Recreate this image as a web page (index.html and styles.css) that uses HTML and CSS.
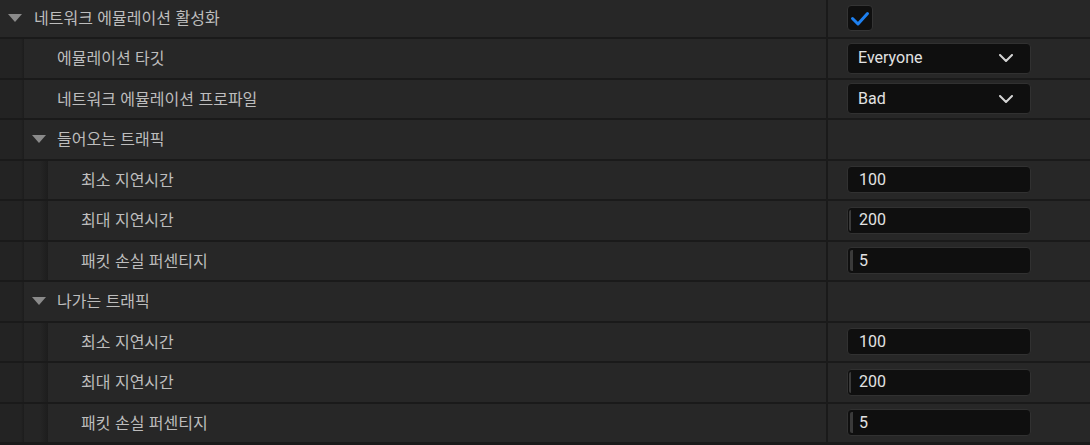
FILE: index.html
```html
<!DOCTYPE html>
<html lang="ko">
<head>
<meta charset="utf-8">
<title>Network Emulation</title>
<link rel="stylesheet" href="styles.css">
</head>
<body>
<div class="panel">
  <div class="row first">
    <div class="name">
      <div class="label group">
        <svg class="tri" width="14" height="8" viewBox="0 0 14 8"><polygon points="0,0 14,0 7,8" fill="#8a8a8a"/></svg>
        <span>네트워크 에뮬레이션 활성화</span>
      </div>
    </div>
    <div class="value">
      <span class="check">
        <svg width="24" height="24" viewBox="0 0 24 24"><polyline points="4.5,12.5 10,18 19.5,7.5" fill="none" stroke="#1e80f0" stroke-width="3" stroke-linecap="round" stroke-linejoin="round"/></svg>
      </span>
    </div>
  </div>

  <div class="row">
    <div class="name">
      <span class="gutter g1"></span>
      <div class="label"><span>에뮬레이션 타깃</span></div>
    </div>
    <div class="value">
      <div class="field combo"><span>Everyone</span>
        <svg class="chev" width="14" height="8" viewBox="0 0 14 8"><polyline points="1,1 7,7 13,1" fill="none" stroke="#d4d4d4" stroke-width="2" stroke-linecap="round" stroke-linejoin="round"/></svg>
      </div>
    </div>
  </div>

  <div class="row">
    <div class="name">
      <span class="gutter g1"></span>
      <div class="label"><span>네트워크 에뮬레이션 프로파일</span></div>
    </div>
    <div class="value">
      <div class="field combo"><span>Bad</span>
        <svg class="chev" width="14" height="8" viewBox="0 0 14 8"><polyline points="1,1 7,7 13,1" fill="none" stroke="#d4d4d4" stroke-width="2" stroke-linecap="round" stroke-linejoin="round"/></svg>
      </div>
    </div>
  </div>

  <div class="row">
    <div class="name">
      <span class="gutter g1"></span>
      <div class="label group">
        <svg class="tri" width="14" height="8" viewBox="0 0 14 8"><polygon points="0,0 14,0 7,8" fill="#8a8a8a"/></svg>
        <span>들어오는 트래픽</span>
      </div>
    </div>
    <div class="value"></div>
  </div>

  <div class="row">
    <div class="name">
      <span class="gutter g1"></span><span class="gutter g2"></span>
      <div class="label"><span>최소 지연시간</span></div>
    </div>
    <div class="value"><div class="field num"><span>100</span></div></div>
  </div>

  <div class="row">
    <div class="name">
      <span class="gutter g1"></span><span class="gutter g2"></span>
      <div class="label"><span>최대 지연시간</span></div>
    </div>
    <div class="value"><div class="field num"><span class="fill fill-s"></span><span>200</span></div></div>
  </div>

  <div class="row">
    <div class="name">
      <span class="gutter g1"></span><span class="gutter g2"></span>
      <div class="label"><span>패킷 손실 퍼센티지</span></div>
    </div>
    <div class="value"><div class="field num"><span class="fill fill-m"></span><span>5</span></div></div>
  </div>

  <div class="row">
    <div class="name">
      <span class="gutter g1"></span>
      <div class="label group">
        <svg class="tri" width="14" height="8" viewBox="0 0 14 8"><polygon points="0,0 14,0 7,8" fill="#8a8a8a"/></svg>
        <span>나가는 트래픽</span>
      </div>
    </div>
    <div class="value"></div>
  </div>

  <div class="row">
    <div class="name">
      <span class="gutter g1"></span><span class="gutter g2"></span>
      <div class="label"><span>최소 지연시간</span></div>
    </div>
    <div class="value"><div class="field num"><span>100</span></div></div>
  </div>

  <div class="row">
    <div class="name">
      <span class="gutter g1"></span><span class="gutter g2"></span>
      <div class="label"><span>최대 지연시간</span></div>
    </div>
    <div class="value"><div class="field num"><span class="fill fill-s"></span><span>200</span></div></div>
  </div>

  <div class="row">
    <div class="name">
      <span class="gutter g1"></span><span class="gutter g2"></span>
      <div class="label"><span>패킷 손실 퍼센티지</span></div>
    </div>
    <div class="value"><div class="field num"><span class="fill fill-m"></span><span>5</span></div></div>
  </div>
</div>
</body>
</html>
```

FILE: styles.css
```css
html, body {
  margin: 0;
  padding: 0;
  background: #1a1a1a;
}

body {
  font-family: "Noto Sans CJK KR", "Noto Sans", sans-serif;
  overflow: hidden;
}

.panel {
  width: 1090px;
  display: flex;
  flex-direction: column;
  gap: 2px;
}

.row {
  display: flex;
  height: 38.5px;
  background: #272727;
  flex: none;
}

.row.first {
  margin-top: -1.5px;
}

.name {
  width: 826px;
  flex: none;
  display: flex;
  align-items: stretch;
}

.gutter {
  width: 24px;
  flex: none;
}

.g1 {
  background: linear-gradient(to right, #232323 0, #232323 21px, #1c1c1c 24px);
}

.g2 {
  background: linear-gradient(to right, #252525 0, #252525 16px, #1d1d1d 24px);
}

.label {
  flex: 1;
  display: flex;
  align-items: center;
  padding-left: 33px;
  padding-bottom: 2px;
  box-sizing: border-box;
  color: #bdbdbd;
  font-size: 16px;
  line-height: 1;
  white-space: nowrap;
}

.label.group {
  padding-left: 8px;
}

.label.group span {
  margin-left: 11px;
}

.first .label.group span {
  margin-left: 12px;
}

.tri {
  flex: none;
  display: block;
  margin-top: 2px;
}

.value {
  flex: 1;
  border-left: 2px solid #1a1a1a;
  display: flex;
  align-items: center;
  padding-left: 19px;
}

.check {
  width: 26px;
  height: 26px;
  box-sizing: border-box;
  background: #0f0f0f;
  border: 1px solid #343434;
  border-radius: 4px;
  display: flex;
  align-items: center;
  justify-content: center;
}

.check svg {
  display: block;
}

.field {
  position: relative;
  width: 184px;
  box-sizing: border-box;
  background: #0f0f0f;
  border: 1px solid #313131;
  border-radius: 4px;
  display: flex;
  align-items: center;
  font-family: Roboto, "Liberation Sans", sans-serif;
  font-size: 16px;
  line-height: 1;
  color: #e2e2e2;
}

.combo {
  height: 31px;
  padding-left: 10px;
  padding-right: 17px;
  justify-content: space-between;
}

.chev {
  display: block;
  flex: none;
}

.num {
  height: 27px;
  padding-left: 11px;
}

.fill {
  position: absolute;
  left: 1px;
  top: 2px;
  bottom: 2px;
  background: #3a3a3a;
  border-radius: 2px 0 0 2px;
}

.fill-s {
  width: 2px;
}

.fill-m {
  left: 2px;
  width: 3px;
}
```
